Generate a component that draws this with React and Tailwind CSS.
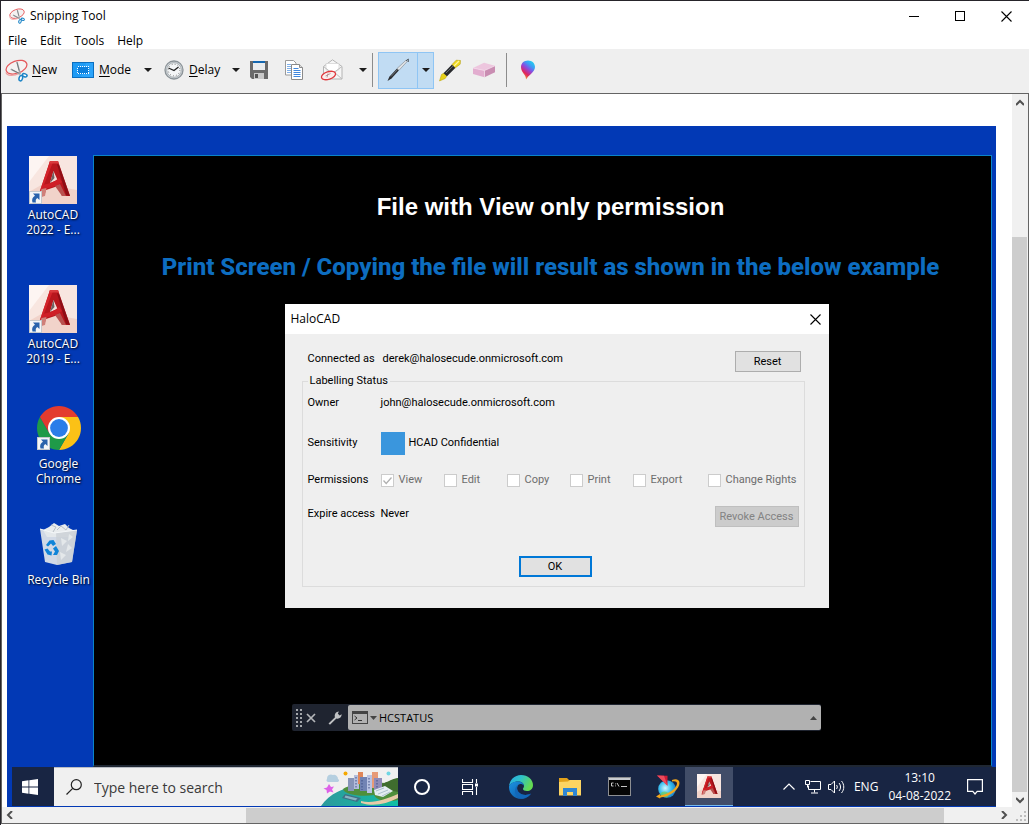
import React, { useState } from 'react';

const SnipIcon = ({ className }) => (
  <svg viewBox="0 0 24 24" className={className} aria-hidden="true">
    <ellipse cx="12" cy="8.500" rx="11.300" ry="6.400" transform="rotate(-20 12 8.500)" fill="#f4f1f1" stroke="#e5585b" strokeWidth="1.300" />
    <path d="M1 14c1 4 8 4 14 1" fill="none" stroke="#eda0a0" strokeWidth="1.200" />
    <path d="M12.500 3l3.500 13M6 10.500l10 5.500" stroke="#a3a9ad" strokeWidth="1.600" fill="none" />
    <path d="M12.500 3.500l2.200 8.500M7 11l7 3.500" stroke="#5b5f62" strokeWidth=".7" fill="none" />
    <ellipse cx="16.500" cy="20" rx="1.800" ry="2.900" transform="rotate(15 16.500 20)" fill="#fff" stroke="#1c84c6" strokeWidth="1.600" />
    <ellipse cx="20.600" cy="17" rx="2.500" ry="1.600" transform="rotate(20 20.600 17)" fill="#fff" stroke="#1c84c6" strokeWidth="1.600" />
  </svg>
);

const ModeIcon = () => (
  <svg viewBox="0 0 22 16" className="w-[22px] h-4" aria-hidden="true">
    <rect x=".5" y=".5" width="21" height="15" fill="#1e9bf5" stroke="#0a6fc0" />
    <path d="M14 1h7v14h-12z" fill="#3aaeff" opacity=".5" />
    <rect x="5.500" y="4.500" width="11" height="7" fill="#0c7fdc" stroke="#fff" strokeDasharray="1 1" shapeRendering="crispEdges" />
  </svg>
);

const ClockIcon = () => (
  <svg viewBox="0 0 20 20" className="size-5" aria-hidden="true">
    <circle cx="10" cy="10" r="9" fill="#d3d8db" stroke="#8b9398" strokeWidth="1.300" />
    <circle cx="10" cy="10" r="7.300" fill="#f4f6f7" stroke="#9aa2a7" strokeWidth=".8" />
    <circle cx="10" cy="10" r="5.800" fill="none" stroke="#666" strokeDasharray=".8 2.240" />
    <path d="M4.500 8L10 10.500L14.500 7" fill="none" stroke="#222" strokeWidth="1.300" />
  </svg>
);

const SaveIcon = () => (
  <svg viewBox="0 0 18 18" className="size-[18px]" aria-hidden="true">
    <path d="M0 0h18v18H2l-2-2z" fill="#6a6a6a" />
    <path d="M3 0h12v9H3z" fill="#e9ecee" />
    <path d="M3 0h12v2H3z" fill="#1467b0" />
    <path d="M4 12h10v6H4z" fill="#c9c9c9" />
    <path d="M5 13h3v4H5z" fill="#555" />
  </svg>
);

const CopyIcon = () => (
  <svg viewBox="0 0 18 20" className="w-[18px] h-5" aria-hidden="true">
    <path d="M.5.5h8l2.500 2.500v12H.5z" fill="#fff" stroke="#9a9a9a" />
    <path d="M2 4.500h4M2 6.500h4M2 8.500h4M2 10.500h4M2 12.500h4" stroke="#7fb0ea" />
    <path d="M6.500 4.500h8l3 3v12h-11z" fill="#fff" stroke="#8a8a8a" />
    <path d="M14.500 4.500v3h3" fill="#ddd" stroke="#8a8a8a" />
    <path d="M8.500 8.500h5M8.500 10.500h7M8.500 12.500h7M8.500 14.500h7M8.500 16.500h7" stroke="#3f87de" />
  </svg>
);

const MailIcon = () => (
  <svg viewBox="0 0 24 22" className="w-6 h-[22px]" aria-hidden="true">
    <path d="M3.500 7.500L12.500.800L22 7.500v12.500H3.500z" fill="#f6f6f6" stroke="#b4b4b4" />
    <path d="M6 4.500h13v6l-6.500 4L6 10.500z" fill="#fff" stroke="#d0d0d0" strokeWidth=".7" />
    <path d="M3.500 7.500l9 7l9.500-7M3.500 20l7-7M22 20l-8-7" fill="none" stroke="#bdbdbd" />
    <ellipse cx="8.500" cy="16.500" rx="7.300" ry="3.800" transform="rotate(-18 8.500 16.500)" fill="#fbeeee" stroke="#e0393e" strokeWidth="1.300" />
    <path d="M5.500 17l5-2.500M7 18.500l1-4" stroke="#a88" strokeWidth=".8" />
  </svg>
);

const PenIcon = () => (
  <svg viewBox="0 0 24 24" className="size-6" aria-hidden="true">
    <path d="M1.500 23l2-4.500L11 10.500l2 1.800L5.500 20.500z" fill="#2b2d30" />
    <path d="M11 10.500l9.200-8.500 1.300 1.200L13 12.300z" fill="#dfe3e6" stroke="#7d858c" strokeWidth=".6" />
    <path d="M20 3l2.300-2v3" fill="none" stroke="#4f575e" />
    <path d="M5 18.500l6.500-7" stroke="#8b9298" strokeWidth=".7" />
  </svg>
);

const HighlighterIcon = () => (
  <svg viewBox="0 0 24 24" className="size-6" aria-hidden="true">
    <path d="M1.500 23l2-6.500 2.500-1.500 3 2.800-1.800 2.700z" fill="#e8d21b" stroke="#b7a000" strokeWidth=".5" />
    <path d="M5.500 15.200L14 6.500l3.500 3.200-8.500 8.600z" fill="#27292c" />
    <path d="M8 15l8-7.800" stroke="#6b7075" />
    <path d="M14 6.500l4.200-4.300 4.300.300-.300 3.700L17.500 9.700z" fill="#efd91f" stroke="#a89300" strokeWidth=".5" />
    <path d="M16 8l5-5" stroke="#fff6a0" strokeWidth="1.200" />
  </svg>
);

const EraserIcon = () => (
  <svg viewBox="0 0 24 16" className="w-6 h-4" aria-hidden="true">
    <path d="M1 6L12 .8l11 3L12.500 8.500z" fill="#edc6de" />
    <path d="M1 6l11.500 2.500v6.700L1 12z" fill="#e2adcf" />
    <path d="M12.500 8.500L23 3.800v6.500l-10.500 4.900z" fill="#c98db2" />
    <path d="M1 6l11.500 2.500L23 3.800M12.500 8.500v6.700" fill="none" stroke="#f6dfee" strokeWidth=".7" />
  </svg>
);

const Paint3DIcon = () => (
  <svg viewBox="0 0 16 20" className="w-4 h-5" aria-hidden="true">
    <defs>
      <linearGradient id="drop" x1=".9" y1="0" x2=".3" y2="1">
        <stop offset="0" stopColor="#19e0ea" />
        <stop offset=".3" stopColor="#3f9bf5" />
        <stop offset=".5" stopColor="#8c4be0" />
        <stop offset=".75" stopColor="#e0245e" />
        <stop offset="1" stopColor="#f5a623" />
      </linearGradient>
    </defs>
    <path d="M8 .5c4 0 7 2.800 7 6.500 0 5-6.500 8-9 12.500C6.500 15 1 12.500 1 7 1 3.300 4 .5 8 .5z" fill="url(#drop)" />
  </svg>
);

const Caret = () => (
  <svg viewBox="0 0 8 4" className="w-2 h-1" aria-hidden="true">
    <path d="M0 0h8L4 4z" fill="#1c1c1c" />
  </svg>
);

const CloseIcon = () => (
  <svg viewBox="0 0 11 11" className="size-[11px]" aria-hidden="true">
    <path d="M.5.5l10 10M10.500.5l-10 10" stroke="#000" strokeWidth="1.100" />
  </svg>
);

const AutoCadIcon = ({ className }) => (
  <svg viewBox="0 0 48 48" className={className} aria-hidden="true">
    <rect width="48" height="48" fill="#f8e6e0" />
    <path d="M0 36l14-8 34 6v14H0z" fill="#f1d3ca" />
    <path d="M0 0h20L0 26z" fill="#fdf5f2" />
    <path d="M21 5h8l12 35h-8l-4-10-12 4-2 6-6 1z" fill="#b8161d" />
    <path d="M21 5h3.500L14 31l-3.500 8H9.500z" fill="#d4232a" />
    <path d="M21 5h8l.8 2.500h-9.500z" fill="#d93a3d" />
    <path d="M28 8l2 1 11 31-4-1z" fill="#8e0e15" />
    <path d="M24.500 15l4 9-7.500 3z" fill="#f5dfd9" />
    <path d="M24.500 15l1 7-4.500 5z" fill="#6d6264" />
    <path d="M13 29c7-1 12-3 17-7l3 4c-5 4-12 6-20 7z" fill="#cf1f27" />
    <path d="M26 30l5-2 6 12h-4z" fill="#b9524f" />
    <path d="M10 41l2.500-8 5-1L16 40z" fill="#cf7f79" />
  </svg>
);

const ChromeIcon = () => (
  <svg viewBox="0 0 44 44" className="size-11" aria-hidden="true">
    <path d="M22 11H41.050A22 22 0 0 1 22 44L31.500 27.500z" fill="#fbc116" />
    <path d="M2.950 11A22 22 0 0 0 22 44L31.500 27.500H12.500z" fill="#1f9a48" />
    <path d="M2.950 11A22 22 0 0 1 41.050 11H22L12.500 27.500z" fill="#e33b2e" />
    <circle cx="22" cy="22" r="11" fill="#fff" />
    <circle cx="22" cy="22" r="8.900" fill="#2b7de9" />
  </svg>
);

const BinIcon = () => (
  <svg viewBox="0 0 40 44" className="w-10 h-11" aria-hidden="true">
    <path d="M4 8l6-3 5-4 5 3 6-2 4 4 6 3-4 6H8z" fill="#e9ecee" />
    <path d="M12 3l5 2-3 5M22 4l5 4 3-5M18 8l4-4" fill="none" stroke="#b9c0c6" />
    <path d="M1 7l14 4 23-3-5 32-15 3-12-3z" fill="#e3e7ea" opacity=".92" />
    <path d="M17 11l21-3-5 32-15 3z" fill="#c9cfd4" opacity=".75" />
    <path d="M1 7l14 4 23-3" fill="none" stroke="#f4f7f9" />
    <path d="M22 16l6 3-5 5zM29 22l4 4-6 4zM21 30l6 3-5 5zM30 12l4 3-5 4z" fill="#e4e8ea" />
    <path d="M7 23l3.500-4.500 4-.500 2.500 4-3 2-2-2.500-3 3zM17 24l3 5-2 4h-4l2-3.500-2-3zM12.500 33.500l-4-1-3-5 3-1 2.500 3h2z" fill="#0f84d8" />
  </svg>
);

const ShortcutArrow = () => (
  <svg viewBox="0 0 13 13" className="absolute left-0 bottom-0 size-[13px]" aria-hidden="true">
    <rect x=".5" y=".5" width="12" height="12" fill="#f4f6f8" stroke="#c5c9cd" />
    <path d="M4 2.500h6.500V9L8.300 7C6.500 8 6.500 10 7 11.500H3.500C2.500 8.500 3.500 6.500 6 4.800z" fill="#2a63ac" />
  </svg>
);

const WindowsLogo = () => (
  <svg viewBox="0 0 16 16" className="size-4" fill="#fff" aria-hidden="true">
    <path d="M0 2.200L6.500 1.300V7.600H0zM7.300 1.200L16 0v7.600H7.300zM0 8.400h6.500v6.300L0 13.800zM7.300 8.400H16V16l-8.700-1.200z" />
  </svg>
);

const CityArt = () => (
  <svg viewBox="0 -4 77 38" className="w-[77px] h-[38px] shrink-0" aria-hidden="true">
    <defs>
      <linearGradient id="sea" x1="0" y1="0" x2="1" y2="0">
        <stop offset="0" stopColor="#2c9a9c" />
        <stop offset="1" stopColor="#10bfa5" />
      </linearGradient>
    </defs>
    <path d="M0 34C8 22 24 14 42 13c16-1 28 4 35 10v11z" fill="url(#sea)" />
    <path d="M22 17c6-5 30-7 42-6l13-5v22c-12 3-22 0-24-5-12 2-30 0-31-6z" fill="#4f8f3c" />
    <path d="M58 12c6 0 12-5 19-6v14l-15-3z" fill="#3f6d2e" />
    <path d="M27 6h6v13h-6z" fill="#8694b8" />
    <path d="M33 3h5v14h-5z" fill="#b3bddb" />
    <path d="M37 0h5v12h-5z" fill="#e0875a" />
    <path d="M39 5h7v14h-7z" fill="#7183b4" />
    <path d="M46 3h5v18h-5z" fill="#b9c3e4" />
    <path d="M51 0h6v16h-6z" fill="#e79a77" />
    <path d="M53 6h8v12h-8z" fill="#8f8bb8" />
    <path d="M35 5v11M41 8v10M48 6v12M56 8v9" stroke="#3e4f86" strokeDasharray="1.500 1.500" />
    <path d="M53 18l11-4 8 5-10 6-8-2z" fill="#e4edf2" />
    <path d="M55 19l8-3M57 22l10-4M61 24l8-4" stroke="#9db4c2" strokeWidth=".8" />
    <path d="M40 29c12 3 25-2 37-7v4c-12 6-24 9-37 5z" fill="#e7cba8" />
    <path d="M24 22l16 4-4 4-15-4z" fill="#3f6f86" />
    <path d="M24.500 23.500l12 3-2 2-11-3z" fill="#88b4c2" />
    <path d="M6 7a4 4 0 0 1 6-4 4 4 0 0 1 5 4c2 1 1 3-1 3H7a2 2 0 0 1-1-3z" fill="#b5cfe0" />
    <path d="M8 12l2 3 3-.500-2 3 1.500 3-3.500-1-3 2-.500-3.500-3-1.500 3.500-1z" fill="#dd62e8" />
    <circle cx="24.500" cy="1.500" r="2" fill="#f5a800" />
    <circle cx="67.500" cy="1.500" r="2" fill="#6fd6e4" />
  </svg>
);

const TaskViewIcon = () => (
  <svg viewBox="0 0 17 16" className="w-[17px] h-4" fill="none" stroke="#fff" aria-hidden="true">
    <path d="M.5 0v3.500h10V0M.5 16v-3.500h10V16M.5 5.500h10v5H.5zM14.500 0v4M14.500 8v8" strokeWidth="1.100" />
    <path d="M13 4.500h3v3h-3z" fill="#fff" stroke="none" />
  </svg>
);

const EdgeIcon = () => (
  <svg viewBox="0 0 24 24" className="size-6" aria-hidden="true">
    <defs>
      <linearGradient id="edgeTop" x1="0" y1="0" x2="1" y2=".4">
        <stop offset="0" stopColor="#2aa9e6" />
        <stop offset=".5" stopColor="#2fc2c9" />
        <stop offset="1" stopColor="#64da52" />
      </linearGradient>
      <linearGradient id="edgeLow" x1="0" y1="0" x2="1" y2="1">
        <stop offset="0" stopColor="#1b93e3" />
        <stop offset="1" stopColor="#0c4f9c" />
      </linearGradient>
    </defs>
    <path d="M0 11.500C.5 5 5.500 0 12 0c7 0 12 4.800 12 10 0 4-3 6-6 6-2.500 0-4-1-4-2s1-1.300 1-3.200C15 8.500 12.500 6.500 9 6.500c-4.500 0-8 2.500-9 5z" fill="url(#edgeTop)" />
    <path d="M0 11.500C1 8.500 4.500 6.500 9 6.500c3.500 0 6 2 6 4.300-1-1.600-2.500-2-4-1.800-3 .5-4 5-1.500 8s8 4 12.500 1.500C20 22 16 24 12 24 5 24-.2 18.500 0 11.500z" fill="url(#edgeLow)" />
    <path d="M11 9c-3 .5-4 5-1.500 8 2.500 3 8 4 12.500 1.500-1.500 2.500-4.500 4.500-8 5C8 23.500 5.500 19 6 15c.4-3.500 2.500-5.500 5-6z" fill="#1267b8" />
  </svg>
);

const FolderIcon = () => (
  <svg viewBox="0 0 22 18" className="w-[22px] h-[18px]" aria-hidden="true">
    <path d="M0 0h8l2 2h11.500v4H0z" fill="#e3a21a" />
    <path d="M0 4l9-.5L11 2h11v15.500H0z" fill="#fcd462" />
    <path d="M4 10h14v8h-4v-4H8v4H4z" fill="#2f86d2" />
  </svg>
);

const TerminalIcon = () => (
  <svg viewBox="0 0 23 19" className="w-[23px] h-[19px]" aria-hidden="true">
    <rect x=".5" y=".5" width="22" height="18" fill="#050505" stroke="#8d8f92" />
    <path d="M1 1h21v2H1z" fill="#c9ccd0" />
    <path d="M5.500 6H3.500v3h2M7.500 6.500v.8M7.500 8.500v.8M9 6l2 3.500M13 9.500h6" fill="none" stroke="#ddd" strokeWidth=".9" />
  </svg>
);

const GlobeIcon = () => (
  <svg viewBox="0 0 24 24" className="size-6" aria-hidden="true">
    <defs>
      <radialGradient id="globe" cx=".4" cy=".45" r=".7">
        <stop offset="0" stopColor="#d3f8ff" />
        <stop offset=".5" stopColor="#38bdee" />
        <stop offset="1" stopColor="#1268b8" />
      </radialGradient>
    </defs>
    <circle cx="11" cy="14" r="8.800" fill="url(#globe)" />
    <path d="M4 19c2-3 5-3 7-2s2 4 0 5.500c-3 .3-5.500-1-7-3.500z" fill="#6fce5a" opacity=".7" />
    <path d="M16 5c4-1.500 7.500-.5 7.500 3 0 6-8 13-19 14.500l-.500 1L0 21.500l4-2.500v1.500C13 19 21 13 21 8.500 21 6.500 19 6 16 6.500z" fill="#f2a51c" />
    <path d="M1 .5L11.500.8v10z" fill="#cf1d35" />
    <path d="M1 .5l10.500 10.300L8 .7z" fill="#ee4a5c" />
  </svg>
);

const autocadVersions = ['AutoCAD 2022 - E...', 'AutoCAD 2019 - E...'];

const permissions = ['View', 'Edit', 'Copy', 'Print', 'Export', 'Change Rights'];

const ScrollArrow = ({ d, label, className }) => (
  <button aria-label={label} className={`flex items-center justify-center shrink-0 ${className}`}>
    <svg viewBox="0 0 8 8" className="size-2" fill="none" stroke="#505050" strokeWidth="2" aria-hidden="true">
      <path d={d} />
    </svg>
  </button>
);

const TitleBar = () => (
  <header className="flex items-center h-[30px] pl-2">
    <SnipIcon className="size-4 mr-[5px]" />
    <h1 className="text-xs">Snipping Tool</h1>
    <div className="ml-auto flex self-stretch">
      <button aria-label="Minimize" className="w-[46px] flex items-center justify-center">
        <span className="w-[10px] h-px bg-black" />
      </button>
      <button aria-label="Maximize" className="w-[46px] flex items-center justify-center">
        <span className="size-[10px] border border-black" />
      </button>
      <button aria-label="Close" className="w-[46px] flex items-center justify-center">
        <CloseIcon />
      </button>
    </div>
  </header>
);

const Toolbar = () => (
  <div className="flex items-center h-[45px] pl-1 pb-[2px] bg-[#efefef] border-b border-[#646464] text-xs">
    <button className="flex items-center gap-1 w-[67px]">
      <SnipIcon className="size-[23px]" />
      <span><u className="underline-offset-2">N</u>ew</span>
    </button>
    <button className="flex items-center gap-[5px] w-[68px]">
      <ModeIcon />
      <span><u className="underline-offset-2">M</u>ode</span>
    </button>
    <button aria-label="Mode options" className="flex items-center justify-center w-[15px] h-6"><Caret /></button>
    <button className="flex items-center gap-[5px] w-16 ml-[9px]">
      <ClockIcon />
      <span><u className="underline-offset-2">D</u>elay</span>
    </button>
    <button aria-label="Delay options" className="flex items-center justify-center w-[15px] h-6"><Caret /></button>
    <button aria-label="Save snip" className="flex items-center justify-center size-6 ml-1"><SaveIcon /></button>
    <button aria-label="Copy" className="flex items-center justify-center size-6 ml-[11px]"><CopyIcon /></button>
    <button aria-label="Send snip" className="flex items-center justify-center size-6 ml-[14px]"><MailIcon /></button>
    <button aria-label="Send options" className="flex items-center justify-center w-[15px] h-6 ml-[11px]"><Caret /></button>
    <span className="w-px h-[34px] bg-[#8c8c8c] ml-[2px]" />
    <div className="flex h-[37px] w-14 ml-[5px] bg-[#c1dcf3] border border-[#8fc5f4]">
      <button aria-label="Pen" className="flex items-center justify-center flex-1"><PenIcon /></button>
      <button aria-label="Pen options" className="flex items-center justify-center w-4 border-l border-[#8fc5f4]"><Caret /></button>
    </div>
    <button aria-label="Highlighter" className="flex items-center justify-center size-6 ml-1"><HighlighterIcon /></button>
    <button aria-label="Eraser" className="flex items-center justify-center size-6 ml-[10px]"><EraserIcon /></button>
    <span className="w-px h-[34px] bg-[#8c8c8c] ml-[10px]" />
    <button aria-label="Edit with Paint 3D" className="flex items-center justify-center size-6 ml-[9px]"><Paint3DIcon /></button>
  </div>
);

const DesktopItem = ({ label, shortcut, children, className }) => (
  <li className={`flex flex-col items-center ${className}`}>
    <span className="relative">
      {children}
      {shortcut && <ShortcutArrow />}
    </span>
    <span className="w-16 text-center text-xs leading-[15px] text-white [text-shadow:1px_1px_2px_#000]">{label}</span>
  </li>
);

const HaloDialog = () => {
  const [checked] = useState({ View: true });

  return (
    <section className="w-full max-w-[544px] bg-[#efefef] text-black">
      <div className="flex items-center justify-between h-[30px] pl-[6px] pr-2 bg-white">
        <h2 className="text-xs">HaloCAD</h2>
        <button aria-label="Close dialog"><CloseIcon /></button>
      </div>
      <div className="pl-[17px] pt-[17px] pb-[21px] pr-6 text-[11px] leading-4 font-['Roboto',sans-serif]">
        <div className="flex items-start pl-[6px] pr-1">
          <span className="w-[75px]">Connected as</span>
          <span>derek@halosecude.onmicrosoft.com</span>
          <button className="ml-auto w-[66px] h-[21px] border border-[#adadad] bg-[#e1e1e1]">Reset</button>
        </div>
        <fieldset className="border border-[#dcdcdc] mt-px px-[5px] pb-[9px]">
          <legend className="px-[2px]">Labelling Status</legend>
          <div className="flex items-center h-7">
            <span className="w-[73px]">Owner</span>
            <span>john@halosecude.onmicrosoft.com</span>
          </div>
          <div className="flex items-center h-[52px]">
            <span className="w-[73px]">Sensitivity</span>
            <span className="w-6 h-[23px] mr-1 bg-[#3a96dd]" />
            <span>HCAD Confidential</span>
          </div>
          <div className="flex items-center h-[22px]">
            <span className="w-[73px]">Permissions</span>
            {permissions.map((p) => (
              <label
                key={p}
                className={`flex items-center gap-[5px] whitespace-nowrap text-[#6d6d6d] ${p === 'Export' ? 'w-[75px]' : p === 'Change Rights' ? '' : 'w-[63px]'}`}
              >
                <span className="relative size-[13px]">
                  <input
                    type="checkbox"
                    disabled
                    defaultChecked={!!checked[p]}
                    className="block size-[13px] appearance-none bg-white border border-[#cccccc]"
                  />
                  {checked[p] && (
                    <svg viewBox="0 0 13 13" className="absolute inset-0 size-[13px]" aria-hidden="true">
                      <path d="M2.500 6.500l2.700 3L10.500 3.500" fill="none" stroke="#b0b0b0" strokeWidth="1.300" />
                    </svg>
                  )}
                </span>
                {p}
              </label>
            ))}
          </div>
          <div className="flex items-start mt-[15px]">
            <span className="w-[73px]">Expire access</span>
            <span>Never</span>
            <button disabled className="ml-auto w-[84px] h-[21px] border border-[#bfbfbf] bg-[#cccccc] text-[#838383]">
              Revoke Access
            </button>
          </div>
          <div className="flex justify-center mt-[29px] pl-1">
            <button className="w-[73px] h-[21px] border-2 border-[#0078d7] bg-[#e1e1e1] leading-none">OK</button>
          </div>
        </fieldset>
      </div>
    </section>
  );
};

const CommandBar = () => {
  const [command, setCommand] = useState('HCSTATUS');

  return (
    <div className="flex items-center w-full max-w-[529px] h-[27px] bg-[#1f2430] rounded-xs">
      <svg viewBox="0 0 6 18" className="w-[6px] h-[18px] ml-1" fill="#a4a7ab" shapeRendering="crispEdges" aria-hidden="true">
        <path d="M0 0h2v2H0zM4 0h2v2H4zM0 4h2v2H0zM4 4h2v2H4zM0 8h2v2H0zM4 8h2v2H4zM0 12h2v2H0zM4 12h2v2H4zM0 16h2v2H0zM4 16h2v2H4z" />
      </svg>
      <button aria-label="Close command line" className="ml-1">
        <svg viewBox="0 0 10 10" className="size-[10px]" stroke="#b4b6b9" strokeWidth="1.700" aria-hidden="true">
          <path d="M1 1l8 8M9 1l-8 8" />
        </svg>
      </button>
      <button aria-label="Customize" className="ml-3 mr-[6px]">
        <svg viewBox="0 0 14 14" className="size-[14px]" fill="#bfc1c3" aria-hidden="true">
          <path d="M.5 12.500L7 6.300C6 3.500 8 .5 11 .5L9.800 2.600l1.800 1.800L13.700 3.300c0 3-2.700 5-5.300 4.200L2 13.700z" />
        </svg>
      </button>
      <div className="flex items-center flex-1 h-[25px] pl-1 pr-1 bg-[#b1b1b1] rounded-xs">
        <svg viewBox="0 0 16 13" className="w-4 h-[13px]" fill="none" aria-hidden="true">
          <rect x=".5" y=".5" width="15" height="12" stroke="#444" />
          <path d="M0 0h16v3H0z" fill="#444" />
          <path d="M2.500 5l2.500 2-2.500 2M6 9.500h4" stroke="#333" />
        </svg>
        <svg viewBox="0 0 7 4" className="w-[7px] h-1 ml-[2px] mr-[2px]" aria-hidden="true">
          <path d="M0 0h7L3.500 4z" fill="#444" />
        </svg>
        <input
          aria-label="Command"
          value={command}
          onChange={(e) => setCommand(e.target.value)}
          className="flex-1 min-w-0 h-5 bg-transparent outline-none text-black text-[11px]"
        />
        <svg viewBox="0 0 7 4" className="w-[7px] h-1" aria-hidden="true">
          <path d="M0 4h7L3.500 0z" fill="#444" />
        </svg>
      </div>
    </div>
  );
};

const Taskbar = () => (
  <footer className="flex items-center h-[39px] ml-[5px] mb-px bg-[#182543] text-white">
    <button aria-label="Start" className="flex items-center justify-center w-[42px] h-full pr-[6px]"><WindowsLogo /></button>
    <div className="flex items-center w-[344px] h-full pl-3 bg-[#f0f0f0] border-t border-[#b8bcc4] overflow-hidden">
      <svg viewBox="0 0 16 16" className="size-4 mr-3 shrink-0" fill="none" stroke="#222" strokeWidth="1.200" aria-hidden="true">
        <circle cx="10.300" cy="5.700" r="5" />
        <path d="M6.700 9.300L.5 15.500" />
      </svg>
      <input
        aria-label="Search"
        placeholder="Type here to search"
        className="flex-1 min-w-0 bg-transparent outline-none text-[14px] placeholder:text-[#3a3a3a]"
      />
      <CityArt />
    </div>
    <button aria-label="Cortana" className="flex items-center justify-center w-12 h-full">
      <span className="size-4 rounded-full border-2 border-white" />
    </button>
    <button aria-label="Task view" className="flex items-center justify-center w-12 h-full"><TaskViewIcon /></button>
    <div className="flex items-center gap-[25px] pl-[15px] pr-[5px]">
      <button aria-label="Edge" className="flex items-center justify-center size-6"><EdgeIcon /></button>
      <button aria-label="File Explorer" className="flex items-center justify-center size-6"><FolderIcon /></button>
      <button aria-label="Command Prompt" className="flex items-center justify-center size-6"><TerminalIcon /></button>
      <button aria-label="Browser" className="flex items-center justify-center size-6"><GlobeIcon /></button>
    </div>
    <button aria-label="AutoCAD" className="flex items-center justify-center w-12 h-full bg-[#414d68] border-b border-[#76b9ed]">
      <AutoCadIcon className="size-6" />
    </button>
    <div className="flex items-center ml-auto pr-[13px] text-xs">
      <button aria-label="Show hidden icons" className="mr-[10px]">
        <svg viewBox="0 0 12 7" className="w-3 h-[7px]" fill="none" stroke="#fff" strokeWidth="1.200" aria-hidden="true">
          <path d="M.5 6.500L6 1l5.500 5.500" />
        </svg>
      </button>
      <button aria-label="Network" className="mr-[7px]">
        <svg viewBox="0 0 16 14" className="w-4 h-[14px]" fill="none" stroke="#fff" aria-hidden="true">
          <path d="M5.500 1.500h10v8H3.500v-4M9.500 9.500v3M6 13h7M.5.5h4v4h-4zM2.500 4.500v3" />
        </svg>
      </button>
      <button aria-label="Volume" className="mr-[9px]">
        <svg viewBox="0 0 17 14" className="w-[17px] h-[14px]" fill="none" stroke="#fff" aria-hidden="true">
          <path d="M.5 4.500h2.500L6.500 1v12L3 9.500H.5z" />
          <path d="M8.500 5c1 1.200 1 2.800 0 4M11 3c2 2.500 2 5.500 0 8M13.500 1c3 3.500 3 8.500 0 12" />
        </svg>
      </button>
      <span className="mr-[10px]">ENG</span>
      <time className="text-center leading-[18px] mr-4">
        13:10<br />04-08-2022
      </time>
      <button aria-label="Notifications">
        <svg viewBox="0 0 16 16" className="size-4" fill="none" stroke="#fff" strokeWidth="1.200" aria-hidden="true">
          <path d="M.6.6h14.800v11.800h-5.200L8 15l-2.200-2.600H.6z" />
        </svg>
      </button>
    </div>
  </footer>
);

const App = () => (
  <div className="min-h-screen flex flex-col bg-white text-black border-t border-l border-[#26242a] font-['Open_Sans','Noto_Sans',sans-serif]">
    <TitleBar />
    <nav className="flex gap-[13px] h-[18px] pl-[7px] pt-[2px] text-xs leading-4">
      {['File', 'Edit', 'Tools', 'Help'].map((item) => (
        <button key={item}>{item}</button>
      ))}
    </nav>
    <Toolbar />

    <div className="flex flex-col flex-1 mb-px border-x border-b border-[#646464]">
      <div className="flex flex-1">
        <main className="flex flex-col flex-1 min-w-0 pt-8 pl-[5px] pr-4">
          <div className="flex flex-col flex-1 bg-[#0239b5]">
            <div className="flex flex-1">
              <aside className="w-[86px] shrink-0 pt-[30px]">
                <ul className="flex flex-col gap-12 pl-[6px]">
                  {autocadVersions.map((name) => (
                    <DesktopItem key={name} label={name} shortcut className="gap-[3px]">
                      <AutoCadIcon className="size-12" />
                    </DesktopItem>
                  ))}
                </ul>
                <ul className="flex flex-col gap-9 pl-[17px] mt-10">
                  <DesktopItem label="Google Chrome" shortcut className="gap-[6px]"><ChromeIcon /></DesktopItem>
                  <DesktopItem label="Recycle Bin" className="gap-[6px] whitespace-nowrap"><BinIcon /></DesktopItem>
                </ul>
              </aside>
              <div className="flex flex-col items-center flex-1 min-w-0 mt-[29px] mr-1 pt-[35px] pb-[34px] pl-4 bg-black border border-b-2 border-[#0a84c8] border-b-[#1f2733]">
                <h2 className="text-2xl leading-8 font-bold text-white text-center font-['Liberation_Sans',sans-serif]">
                  File with View only permission
                </h2>
                <p className="mt-7 text-2xl leading-8 font-extrabold text-[#0d6dc0] text-center font-['Roboto',sans-serif]">
                  Print Screen / Copying the file will result as shown in the below example
                </p>
                <div className="flex flex-col items-center flex-1 w-full mt-[21px] pl-3">
                  <HaloDialog />
                  <div className="flex-1 min-h-24" />
                  <CommandBar />
                </div>
              </div>
            </div>
            <Taskbar />
          </div>
        </main>
        <div className="flex flex-col w-4 bg-[#f0f0f0]">
          <ScrollArrow label="Scroll up" d="M0 6l4-4 4 4" className="w-[15px] h-[17px]" />
          <div className="flex-[126]" />
          <div className="flex-[555] w-[15px] bg-[#cdcdcd]" />
          <ScrollArrow label="Scroll down" d="M0 2l4 4 4-4" className="w-[15px] h-[15px]" />
        </div>
      </div>
      <div className="flex items-center h-4 bg-[#f0f0f0]">
        <ScrollArrow label="Scroll left" d="M6 0L2 4l4 4" className="w-4 h-full" />
        <div className="flex-[228]" />
        <div className="flex-[698] h-[15px] bg-[#cdcdcd]" />
        <div className="flex-[52]" />
        <ScrollArrow label="Scroll right" d="M2 0l4 4-4 4" className="w-4 h-full" />
        <svg viewBox="0 0 16 16" className="size-4" fill="#bdbdbd" aria-hidden="true">
          <path d="M12 4h2v2h-2zM12 8h2v2h-2zM12 12h2v2h-2zM8 8h2v2H8zM8 12h2v2H8zM4 12h2v2H4z" />
        </svg>
      </div>
    </div>
  </div>
);

export default App;
